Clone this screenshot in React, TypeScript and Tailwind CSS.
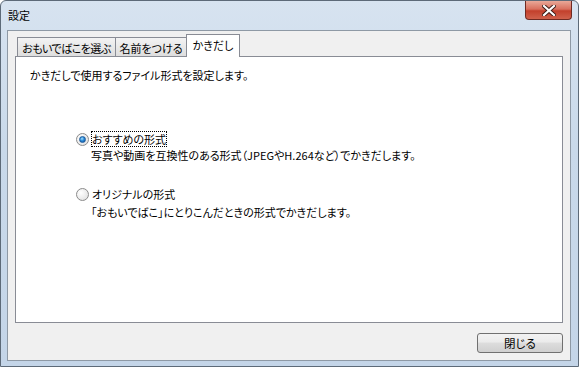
import React from "react";

const font = "font-['Noto_Sans_CJK_JP','Noto_Sans',sans-serif] [font-feature-settings:'palt']";

function Radio({ checked }: { checked?: boolean }) {
  return (
    <div className="w-[13px] h-[13px] rounded-full border border-[#8b8b8b] bg-[radial-gradient(circle_at_35%_35%,#ffffff,#dcdcdc)] flex items-center justify-center shrink-0">
      {checked && (
        <div className="w-[7px] h-[7px] rounded-full bg-[radial-gradient(circle_at_40%_35%,#a8e0ff_0%,#2a8bd8_45%,#0a4a9a_100%)] border border-[#1c5a9a]" />
      )}
    </div>
  );
}

export default function App() {
  return (
    <div className={`w-[579px] h-[367px] bg-[linear-gradient(180deg,#d7e3f0_0%,#c9d9ea_40%,#c4d5e8_100%)] border border-[#5d6a78] rounded-t-[6px] flex flex-col text-[11px] text-black ${font}`}>
      {/* Title bar */}
      <div className="h-[29px] flex items-start justify-between shrink-0">
        <div className="pl-[7px] pt-[6px] text-[11px] leading-[16px] text-black">設定</div>
        <div className="mr-[6px] w-[47px] h-[19px] rounded-b-[4px] border border-t-0 border-[#6f2a22] bg-[linear-gradient(180deg,#e9a898_0%,#d8705e_45%,#c3402c_55%,#d0614c_100%)] flex items-center justify-center">
          <svg width="14" height="11" viewBox="0 0 14 11">
            <path d="M2 1 L12 10 M12 1 L2 10" stroke="#3a1a14" strokeWidth="4" strokeLinecap="square" />
            <path d="M2 1 L12 10 M12 1 L2 10" stroke="#ffffff" strokeWidth="2.2" strokeLinecap="square" />
          </svg>
        </div>
      </div>
      {/* Client area */}
      <div className="ml-[6px] mr-[7px] mb-[5px] flex-1 border border-[#8e99a5] bg-[#f0f0f0] flex flex-col px-[7px] pt-[3px]">
        {/* Tabs */}
        <div className="flex items-end h-[22px] pl-[2px] shrink-0 whitespace-nowrap text-[11px]">
          <div className="w-[99px] h-[19px] border border-b-0 border-[#898c95] bg-[linear-gradient(180deg,#f3f3f3,#dedede)] flex items-center justify-center leading-[16px] pt-[1px] tracking-[-0.5px]">
            おもいでばこを選ぶ
          </div>
          <div className="w-[71px] h-[19px] border border-b-0 border-l-0 border-[#898c95] bg-[linear-gradient(180deg,#f3f3f3,#dedede)] flex items-center justify-center leading-[16px] pt-[1px]">
            名前をつける
          </div>
          <div className="w-[54px] h-[23px] -mb-px relative z-10 border border-b-0 border-[#898c95] bg-white flex items-start justify-center pt-[2px] leading-[16px] -ml-px">
            かきだし
          </div>
        </div>
        {/* Panel */}
        <div className="h-[267px] border border-[#898c95] bg-white shrink-0 flex flex-col pl-[14px] pt-[10px] whitespace-nowrap">
          <div className="leading-[16px]">かきだしで使用するファイル形式を設定します。</div>
          <div className="flex flex-col pl-[46px] pt-[48px]">
            <div className="flex items-center gap-[2px] h-[16px]">
              <Radio checked />
              <span className="border border-dotted border-black leading-[14px] px-0">おすすめの形式</span>
            </div>
            <div className="pl-[15px] leading-[16px]">写真や動画を互換性のある形式（JPEGやH.264など）でかきだします。</div>
            <div className="flex items-center gap-[3px] h-[16px] mt-[23px]">
              <Radio />
              <span className="leading-[14px]">オリジナルの形式</span>
            </div>
            <div className="pl-[15px] leading-[16px] mt-[2px]">「おもいでばこ」にとりこんだときの形式でかきだします。</div>
          </div>
        </div>
        {/* Buttons */}
        <div className="flex justify-end pt-[10px]">
          <button className="w-[86px] h-[20px] rounded-[3px] border border-[#707070] bg-[linear-gradient(180deg,#f2f2f2_0%,#ebebeb_45%,#dddddd_50%,#cfcfcf_100%)] text-[11.5px] leading-[16px] flex items-center justify-center">
            閉じる
          </button>
        </div>
      </div>
    </div>
  );
}
